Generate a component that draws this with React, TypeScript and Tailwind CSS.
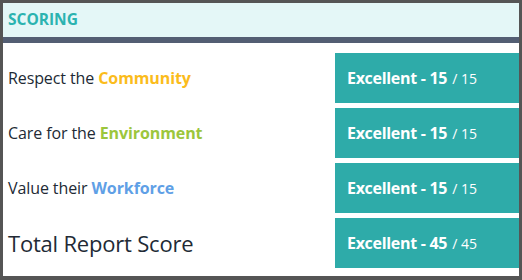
import React from 'react';

const rows = [
  { label: 'Respect the ', accent: 'Community', color: 'text-[#fbbc1c]', score: 15, max: 15 },
  { label: 'Care for the ', accent: 'Environment', color: 'text-[#9cc63c]', score: 15, max: 15 },
  { label: 'Value their ', accent: 'Workforce', color: 'text-[#5fa0e6]', score: 15, max: 15 },
];

function ScoreBox({ score, max }: { score: number; max: number }) {
  return (
    <div className="flex h-[50px] items-center bg-[#2eaba9] pl-3 text-white">
      <span className="text-[16px] font-bold tracking-[-0.3px]">Excellent - {score}</span>
      <span className="ml-[5px] text-[14px]">/ {max}</span>
    </div>
  );
}

export default function App() {
  return (
    <div
      className="h-[280px] w-[522px] border-t-[3px] border-l-[3px] border-r-[3px] border-b-4 border-[#555555] bg-white text-[#222a35]"
      style={{ fontFamily: '"Open Sans", "Noto Sans", sans-serif' }}
    >
      {/* header */}
      <div className="flex h-[34px] items-center bg-[#e4f7f7] pl-[5px]">
        <span className="text-[15.5px] font-bold text-[#2bb3b0]">SCORING</span>
      </div>
      <div className="h-[6px] bg-[#535e73]" />

      {/* rows */}
      <div className="grid grid-cols-[332px_1fr] gap-y-[5px] pt-[10px]">
        {rows.map((row) => (
          <React.Fragment key={row.accent}>
            <div className="flex items-center pl-[5px] text-[16px] tracking-[-0.1px]">
              <span className="whitespace-pre">{row.label}</span>
              <span className={`font-bold ${row.color}`}>{row.accent}</span>
            </div>
            <ScoreBox score={row.score} max={row.max} />
          </React.Fragment>
        ))}
        <div className="flex items-center pl-[5px] text-[22px] tracking-[-0.2px]">Total Report Score</div>
        <ScoreBox score={45} max={45} />
      </div>
    </div>
  );
}
